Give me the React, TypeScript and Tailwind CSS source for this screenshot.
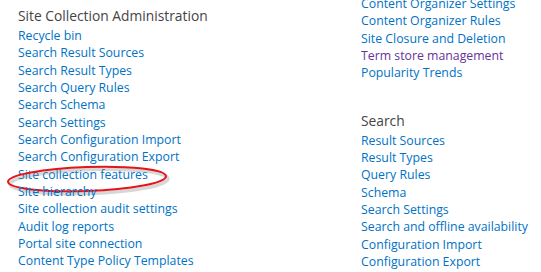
const left = [
  "Recycle bin",
  "Search Result Sources",
  "Search Result Types",
  "Search Query Rules",
  "Search Schema",
  "Search Settings",
  "Search Configuration Import",
  "Search Configuration Export",
  "Site collection features",
  "Site hierarchy",
  "Site collection audit settings",
  "Audit log reports",
  "Portal site connection",
  "Content Type Policy Templates",
];

const rightTop = [
  "Content Organizer Settings",
  "Content Organizer Rules",
  "Site Closure and Deletion",
  "Term store management",
  "Popularity Trends",
];

const search = [
  "Result Sources",
  "Result Types",
  "Query Rules",
  "Schema",
  "Search Settings",
  "Search and offline availability",
  "Configuration Import",
  "Configuration Export",
];

function Link({ label }: { label: string }) {
  const visited = label === "Term store management";
  const marked = label === "Site collection features";
  return (
    <li className="relative h-[17.33px] leading-[17.33px] whitespace-nowrap">
      <a href="#" className={visited ? "text-[#663399]" : "text-[#0072c6]"}>{label}</a>
      {marked && (
        // red hand-drawn ring round the link
        <svg className="pointer-events-none absolute left-[-18px] top-[-6px]" width="190" height="44" viewBox="0 0 190 44">
          <ellipse cx="89" cy="21.5" rx="79" ry="12" fill="none" stroke="#8c8c8c" strokeOpacity="0.35" strokeWidth="3.5" transform="rotate(-2 89 21.5)" />
          <ellipse cx="87" cy="19" rx="79" ry="12" fill="none" stroke="#e3141b" strokeWidth="2" transform="rotate(-2 87 19)" />
        </svg>
      )}
    </li>
  );
}

export default function App() {
  return (
    <div className="flex h-[272px] w-[541px] overflow-hidden bg-white text-[12.3px]" style={{ fontFamily: '"Open Sans", "Noto Sans", sans-serif' }}>
      <div className="w-[361px] shrink-0 pl-[18px] pt-[5px]">
        <h2 className="h-[22px] text-[13.8px] leading-[22px] text-[#444]">Site Collection Administration</h2>
        <ul>
          {left.map((l) => <Link key={l} label={l} />)}
        </ul>
      </div>
      <div className="-mt-[5px]">
        <ul>
          {rightTop.map((l) => <Link key={l} label={l} />)}
        </ul>
        <h2 className="mt-[28px] h-[22px] text-[13.8px] leading-[22px] text-[#444]">Search</h2>
        <ul>
          {search.map((l) => <Link key={l} label={l} />)}
        </ul>
      </div>
    </div>
  );
}
